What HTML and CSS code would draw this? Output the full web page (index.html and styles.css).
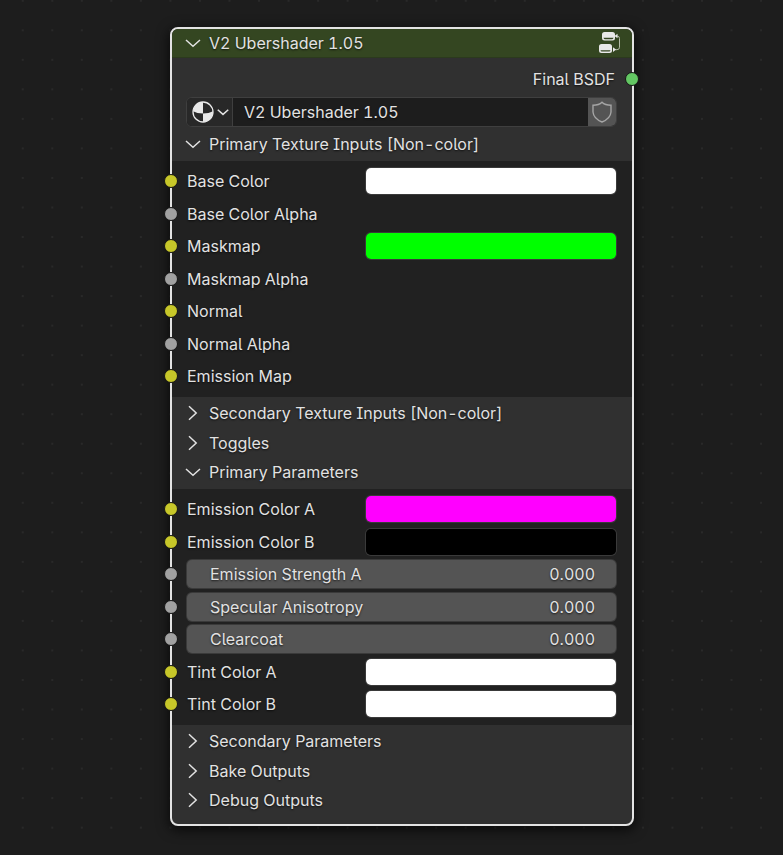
FILE: index.html
```html
<!DOCTYPE html>
<html lang="en">
<head>
<meta charset="utf-8">
<title>Node Editor</title>
<link rel="stylesheet" href="styles.css">
</head>
<body>
<svg class="defs" aria-hidden="true">
  <symbol id="down" viewBox="0 0 16 16"><path d="M1 5 8 11.2 15 5"/></symbol>
  <symbol id="right" viewBox="0 0 16 16"><path d="M4 1.200 11.200 8 4 14.800"/></symbol>
</svg>
<main class="canvas">
  <article class="node">
    <header class="node-header">
      <button class="toggle" type="button" aria-expanded="true"><svg class="chevron"><use href="#down"/></svg>V2 Ubershader 1.05</button>
      <button class="icon-button" type="button" aria-label="Edit group">
        <svg class="group-icon" viewBox="0 0 24 24">
          <path class="solid" fill-rule="evenodd" d="M6.500 1h8a2.500 2.500 0 0 1 2.500 2.500V7a2.500 2.500 0 0 1-2.500 2.500h-8A2.500 2.500 0 0 1 4 7V3.500A2.500 2.500 0 0 1 6.500 1ZM5.500 6.800q.2 1.400 1.300 1.400h7.400q1.100 0 1.300-1.400Z"/>
          <path class="solid" fill-rule="evenodd" d="M3.500 13h8a2.500 2.500 0 0 1 2.500 2.500V19.500a2.500 2.500 0 0 1-2.500 2.500h-8A2.500 2.500 0 0 1 1 19.500V15.500A2.500 2.500 0 0 1 3.500 13ZM2.500 19.200q.2 1.400 1.300 1.400h7.400q1.100 0 1.300-1.400Z"/>
          <path class="line" d="M18 5h1q2.500 0 2.500 2.500v8.700q0 2.500-2.500 2.500h-3"/>
          <path class="solid" d="M19.500 2.800V7.200L16.500 5ZM15 16.300l3 2.300-3 2.300Z"/>
        </svg>
      </button>
    </header>

    <div class="output">Final BSDF<i class="socket shader"></i></div>

    <div class="datablock">
      <button class="browse" type="button" aria-label="Browse node groups">
        <svg class="material-icon" viewBox="0 0 22 22">
          <circle class="ring" cx="11" cy="11" r="10"/>
          <path class="solid" d="M11 1V12.500Q5 12.500 1 10.200A10 10 0 0 1 11 1Z"/>
          <path class="solid" d="M11 12.500Q17 12.500 21 10.200A10 10 0 0 1 11 21Z"/>
        </svg>
        <svg class="small-chevron"><use href="#down"/></svg>
      </button>
      <input class="name" type="text" value="V2 Ubershader 1.05" aria-label="Node group name">
      <button class="fake-user" type="button" aria-label="Fake user">
        <svg class="shield-icon" viewBox="0 0 22 22"><path d="M11 1.200Q14 4.200 20 4.200V11Q19.500 17.500 11 21 2.500 17.500 2 11V4.200Q8 4.200 11 1.200Z"/></svg>
      </button>
    </div>

    <div class="panel-group">
      <button class="toggle" type="button" aria-expanded="true"><svg class="chevron"><use href="#down"/></svg>Primary Texture Inputs [Non-color]</button>
    </div>
    <section class="panel">
      <div class="row"><i class="socket color"></i><label for="base">Base Color</label><input class="swatch" id="base" type="color" value="#ffffff"></div>
      <div class="row"><i class="socket value"></i><span>Base Color Alpha</span></div>
      <div class="row"><i class="socket color"></i><label for="mask">Maskmap</label><input class="swatch" id="mask" type="color" value="#00ff00"></div>
      <div class="row"><i class="socket value"></i><span>Maskmap Alpha</span></div>
      <div class="row"><i class="socket color"></i><span>Normal</span></div>
      <div class="row"><i class="socket value"></i><span>Normal Alpha</span></div>
      <div class="row"><i class="socket color"></i><span>Emission Map</span></div>
    </section>

    <div class="panel-group">
      <button class="toggle" type="button" aria-expanded="false"><svg class="chevron"><use href="#right"/></svg>Secondary Texture Inputs [Non-color]</button>
      <button class="toggle" type="button" aria-expanded="false"><svg class="chevron"><use href="#right"/></svg>Toggles</button>
      <button class="toggle" type="button" aria-expanded="true"><svg class="chevron"><use href="#down"/></svg>Primary Parameters</button>
    </div>
    <section class="panel">
      <div class="row"><i class="socket color"></i><label for="emit-a">Emission Color A</label><input class="swatch" id="emit-a" type="color" value="#ff00ff"></div>
      <div class="row"><i class="socket color"></i><label for="emit-b">Emission Color B</label><input class="swatch" id="emit-b" type="color" value="#000000"></div>
      <div class="row number"><i class="socket value"></i><label for="strength">Emission Strength A</label><input id="strength" type="text" value="0.000"></div>
      <div class="row number"><i class="socket value"></i><label for="aniso">Specular Anisotropy</label><input id="aniso" type="text" value="0.000"></div>
      <div class="row number"><i class="socket value"></i><label for="coat">Clearcoat</label><input id="coat" type="text" value="0.000"></div>
      <div class="row"><i class="socket color"></i><label for="tint-a">Tint Color A</label><input class="swatch" id="tint-a" type="color" value="#ffffff"></div>
      <div class="row"><i class="socket color"></i><label for="tint-b">Tint Color B</label><input class="swatch" id="tint-b" type="color" value="#ffffff"></div>
    </section>

    <div class="panel-group last">
      <button class="toggle" type="button" aria-expanded="false"><svg class="chevron"><use href="#right"/></svg>Secondary Parameters</button>
      <button class="toggle" type="button" aria-expanded="false"><svg class="chevron"><use href="#right"/></svg>Bake Outputs</button>
      <button class="toggle" type="button" aria-expanded="false"><svg class="chevron"><use href="#right"/></svg>Debug Outputs</button>
    </div>
  </article>
</main>
</body>
</html>
```
FILE: styles.css
```css
* { box-sizing: border-box; }

body {
  margin: 0;
  background: #1d1d1d;
  color: #e2e2e2;
  font: 16px/20px Inter, sans-serif;
  font-feature-settings: "cv05", "cv08", "tnum";
}

button, input {
  margin: 0;
  padding: 0;
  border: 0;
  background: none;
  color: inherit;
  font: inherit;
  font-feature-settings: inherit;
  text-shadow: inherit;
}

svg { flex: none; fill: none; stroke: #e2e2e2; }
.defs { position: absolute; width: 0; height: 0; }

.canvas {
  min-height: 100vh;
  padding: 27px 149px 29px 170px;
  background-image: radial-gradient(circle, #292929 1px, transparent 1px);
  background-size: calc(650px / 22) calc(650px / 22);
  background-position: 8px -14px;
}

.node {
  border: 2px solid #e3e3e3;
  border-radius: 8px;
  background: #303030;
  box-shadow: 0 3px 12px 2px rgba(0, 0, 0, .6);
  text-shadow: 0 1px 2px rgba(0, 0, 0, .7);
}

.node-header {
  display: flex;
  justify-content: space-between;
  align-items: center;
  height: 29px;
  padding-right: 10px;
  border-bottom: 1px solid #2b3a1d;
  border-radius: 6px 6px 0 0;
  background: #344621;
}

.icon-button { display: flex; }
.group-icon { width: 24px; height: 24px; }
.group-icon .line { stroke: #b5bba8; stroke-width: 1; }
.solid { fill: #e8e8e8; stroke: none; }

.toggle {
  display: flex;
  align-items: center;
  gap: 8px;
  padding-left: 13px;
  text-align: left;
}
.chevron { width: 16px; height: 16px; stroke-width: 1.500; }

.output {
  position: relative;
  padding: 11px 17px 8px;
  text-align: right;
}

.datablock {
  display: flex;
  height: 30px;
  margin: 0 15px 1px 14px;
  border: 1px solid #3f3f3f;
  border-radius: 6px;
  background: #1d1d1d;
  overflow: hidden;
}
.browse {
  display: flex;
  align-items: center;
  gap: 3px;
  padding: 0 3px 0 5px;
  border-right: 1px solid #3f3f3f;
  background: #282828;
}
.material-icon { width: 22px; height: 22px; }
.ring { stroke: #e8e8e8; stroke-width: 1.300; }
.small-chevron { width: 12px; height: 12px; stroke-width: 2; }
.name { flex: 1; min-width: 0; padding-left: 11px; }
.fake-user {
  display: flex;
  align-items: center;
  padding: 0 3px;
  background: #545454;
}
.shield-icon { width: 22px; height: 22px; stroke: #a5a5a5; stroke-width: 1.400; }

.panel-group {
  display: grid;
  grid-auto-rows: 30px 29px;
  padding: 1px 0 2px;
}
.panel-group.last { padding-bottom: 9px; }

.panel {
  display: grid;
  grid-auto-rows: 33px 32px;
  padding: 6px 0 2px;
  background: #212121;
}
.row {
  position: relative;
  display: grid;
  grid-template-columns: 5fr 7fr;
  align-items: center;
  height: 28px;
  margin: 0 16px 0 15px;
}

.swatch {
  width: 100%;
  height: 26px;
  border-radius: 5px;
  box-shadow: 0 0 0 1px #3a3a3a;
  appearance: none;
  overflow: hidden;
}
.swatch::-webkit-color-swatch-wrapper { padding: 0; }
.swatch::-webkit-color-swatch { border: 0; border-radius: 0; }

.number {
  padding: 0 21px 0 23px;
  border-radius: 5px;
  background: #545454;
  box-shadow: 0 0 0 1px #3a3a3a;
  grid-template-columns: 1fr 80px;
}
.number input { width: 100%; text-align: right; }

.socket {
  position: absolute;
  left: -23px;
  top: 7px;
  width: 14px;
  height: 14px;
  border: 1px solid #161616;
  border-radius: 50%;
}
.color { background: #c7c729; }
.value { background: #a1a1a1; }
.shader { left: auto; right: -7px; top: 14px; background: #63c763; }
```
